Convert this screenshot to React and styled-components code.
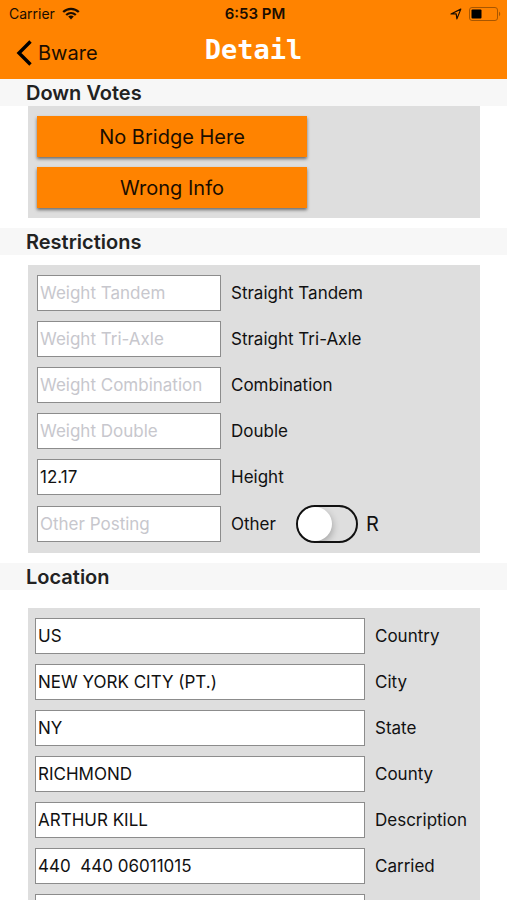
import React from 'react'
import styled, { createGlobalStyle } from 'styled-components'

const GlobalStyle = createGlobalStyle`
  * {
    box-sizing: border-box;
  }

  body {
    margin: 0;
    background: #fff;
    color: #111;
    font-family: Inter, "Liberation Sans", sans-serif;
  }
`

const Screen = styled.div`
  display: flex;
  flex-direction: column;
  height: 100vh;
`

const Header = styled.header`
  flex: none;
  background: #ff8300;
  color: #1a0d00;
`

const StatusBar = styled.div`
  display: grid;
  grid-template-columns: 1fr auto 1fr;
  align-items: center;
  height: 27px;
  padding: 0 6px 0 9px;
  font-size: 14px;
`

const StatusGroup = styled.div`
  display: flex;
  align-items: center;
  gap: 7px;
  justify-content: ${props => props.$end ? 'flex-end' : 'flex-start'};
`

const Time = styled.span`
  font-size: 15px;
  font-weight: 600;
`

const NavBar = styled.nav`
  display: grid;
  grid-template-columns: 1fr auto 1fr;
  align-items: center;
  height: 52px;
  padding: 0 16px;
`

const BackLink = styled.a`
  display: flex;
  align-items: center;
  gap: 6px;
  color: inherit;
  font-size: 20px;
  text-decoration: none;
`

const Title = styled.h1`
  margin: 0;
  padding-bottom: 6px;
  color: #fff;
  font-family: Chalkduster, "DejaVu Sans Mono", cursive;
  font-size: 27px;
  font-weight: 700;
  line-height: 32px;
`

const Content = styled.main`
  flex: 1;
  min-height: 0;
  overflow-y: auto;
  scrollbar-width: none;
`

const SectionTitle = styled.h2`
  margin: 0;
  padding: 2px 26px 0;
  background: #f7f7f7;
  color: #222;
  font-size: 20px;
  font-weight: 600;
  line-height: 25px;
`

const Panel = styled.section`
  display: flex;
  flex-direction: column;
  gap: 10px;
  margin: ${props => props.$top || 0}px 27px 10px 28px;
  padding: 10px 0 10px ${props => props.$left || 9}px;
  background: #dedede;
`

const VoteButton = styled.button`
  width: 270px;
  height: 41px;
  border: none;
  background: #ff8300;
  box-shadow: 0 2px 3px rgba(0, 0, 0, 0.5);
  color: #1a0d00;
  font-family: inherit;
  font-size: 20px;
`

const Row = styled.div`
  display: flex;
  align-items: center;
  gap: 10px;
`

const Field = styled.input`
  flex: ${props => props.$wide ? '1 1 0' : '0 0 184px'};
  min-width: 0;
  height: 36px;
  padding: 0 2px;
  border: 1px solid #8c8c8c;
  border-radius: 0;
  background: #fff;
  color: #111;
  font-family: inherit;
  font-size: 17px;

  &::placeholder {
    color: #c7c7cd;
    opacity: 1;
  }

  &:focus {
    outline: none;
  }
`

const FieldLabel = styled.label`
  flex: ${props => props.$column ? '0 0 105px' : 'none'};
  font-size: 17px;
`

const PostingToggle = styled.label`
  display: flex;
  align-items: center;
  gap: 8px;
  margin-left: 10px;
  font-size: 20px;
  line-height: 36px;
`

const Switch = styled.input`
  appearance: none;
  width: 62px;
  height: 38px;
  margin: 0;
  border: 2px solid #111;
  border-radius: 19px;
  overflow: hidden;

  &::before {
    content: "";
    display: block;
    width: 34px;
    height: 34px;
    border-radius: 17px;
    background: #fff;
    box-shadow: 1px 3px 7px rgba(0, 0, 0, 0.25);
  }

  &:checked::before {
    margin-left: auto;
  }
`

const restrictions = [
  { id: 'tandem', label: 'Straight Tandem', placeholder: 'Weight Tandem' },
  { id: 'triaxle', label: 'Straight Tri-Axle', placeholder: 'Weight Tri-Axle' },
  { id: 'combination', label: 'Combination', placeholder: 'Weight Combination' },
  { id: 'double', label: 'Double', placeholder: 'Weight Double' },
  { id: 'height', label: 'Height', value: '12.17' },
  { id: 'other', label: 'Other', placeholder: 'Other Posting', toggle: true },
]

const location = [
  { id: 'country', label: 'Country', value: 'US' },
  { id: 'city', label: 'City', value: 'NEW YORK CITY (PT.)' },
  { id: 'state', label: 'State', value: 'NY' },
  { id: 'county', label: 'County', value: 'RICHMOND' },
  { id: 'description', label: 'Description', value: 'ARTHUR KILL' },
  { id: 'carried', label: 'Carried', value: '440  440 06011015' },
  { id: 'carried2', value: '' },
]

const WifiIcon = () => (
  <svg width="18" height="13" viewBox="0 0 18 13" aria-hidden="true">
    <g fill="none" stroke="currentColor" strokeWidth="2.3">
      <path d="M1.2 5C5.6 0.7 12.4 0.7 16.8 5" />
      <path d="M4.2 8C7 5.4 11 5.4 13.8 8" />
    </g>
    <path d="M9 12.5L6.2 9.6C7.8 8.2 10.2 8.2 11.8 9.6Z" fill="currentColor" />
  </svg>
)

const LocationIcon = () => (
  <svg width="12" height="12" viewBox="0 0 12 12" aria-hidden="true">
    <path d="M1 6L10.8 1.1L6.9 10.9L6.2 5.9Z" fill="none" stroke="currentColor" strokeWidth="1.2" strokeLinejoin="round" />
  </svg>
)

const BatteryIcon = () => (
  <svg width="32" height="14" viewBox="0 0 32 14" aria-hidden="true">
    <rect x="0.5" y="0.5" width="28" height="13" rx="2.5" fill="none" stroke="#a85600" />
    <rect x="2.5" y="2.5" width="10" height="9" rx="1" fill="#000" />
    <path d="M30 4.8C31.6 5.4 31.6 8.6 30 9.2Z" fill="#a85600" />
  </svg>
)

const BackIcon = () => (
  <svg width="16" height="26" viewBox="0 0 16 26" aria-hidden="true">
    <path d="M14.5 1.5L3 13L14.5 24.5" fill="none" stroke="#000" strokeWidth="3.4" />
  </svg>
)

export default class App extends React.Component {

  constructor(props) {
    super(props)
    const values = {}
    restrictions.concat(location).forEach(field => {
      values[field.id] = field.value || ''
    })
    this.state = { values, posted: false }
  }

  handleChange(e) {
    this.setState({ values: { ...this.state.values, [e.target.id]: e.target.value } })
  }

  handleToggle(e) {
    this.setState({ posted: e.target.checked })
  }

  renderField(field, wide) {
    return (
      <Row key={field.id}>
        <Field
          id={field.id}
          $wide={wide}
          placeholder={field.placeholder}
          aria-label={field.label ? undefined : 'Carried, continued'}
          value={this.state.values[field.id]}
          onChange={this.handleChange.bind(this)}
        />
        <FieldLabel htmlFor={field.id} $column={wide}>{field.label}</FieldLabel>
        {field.toggle && (
          <PostingToggle>
            <Switch
              type="checkbox"
              role="switch"
              checked={this.state.posted}
              onChange={this.handleToggle.bind(this)}
            />
            R
          </PostingToggle>
        )}
      </Row>
    )
  }

  render() {
    return (
      <Screen>
        <GlobalStyle />
        <Header>
          <StatusBar>
            <StatusGroup>Carrier <WifiIcon /></StatusGroup>
            <Time>6:53 PM</Time>
            <StatusGroup $end><LocationIcon /><BatteryIcon /></StatusGroup>
          </StatusBar>
          <NavBar>
            <BackLink href="#"><BackIcon />Bware</BackLink>
            <Title>Detail</Title>
          </NavBar>
        </Header>
        <Content>
          <SectionTitle>Down Votes</SectionTitle>
          <Panel>
            <VoteButton type="button">No Bridge Here</VoteButton>
            <VoteButton type="button">Wrong Info</VoteButton>
          </Panel>
          <SectionTitle>Restrictions</SectionTitle>
          <Panel $top={10}>
            {restrictions.map(field => this.renderField(field, false))}
          </Panel>
          <SectionTitle>Location</SectionTitle>
          <Panel $top={18} $left={7}>
            {location.map(field => this.renderField(field, true))}
          </Panel>
        </Content>
      </Screen>
    )
  }
}
